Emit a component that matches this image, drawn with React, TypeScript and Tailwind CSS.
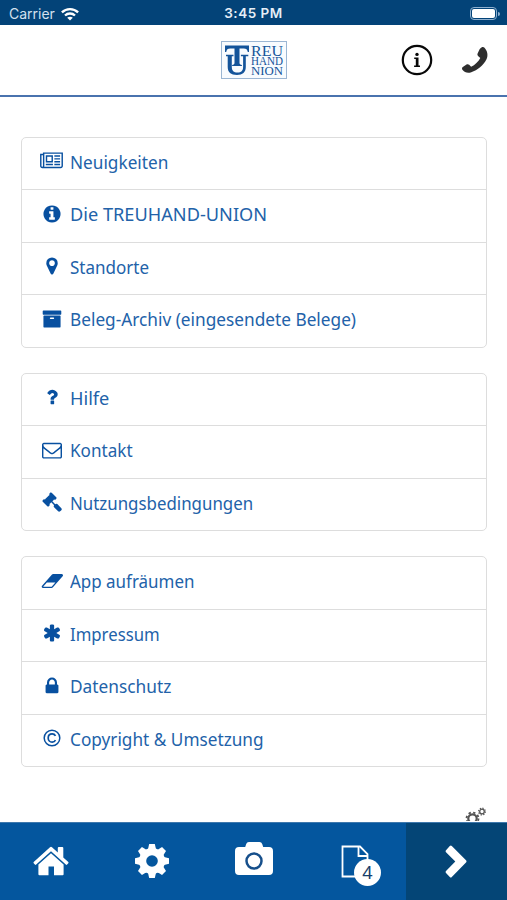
import React from "react";

type Glyph = { box: string; d: string; className: string };

const icons: Record<string, Glyph> = {
  news: {
    box: "0 0 2048 1792",
    className: "w-[23px] h-[20px]",
    d: "M1024 512h-384v384h384v-384zm128 640v128h-640v-128h640zm0-768v640h-640v-640h640zm640 768v128h-512v-128h512zm0-256v128h-512v-128h512zm0-256v128h-512v-128h512zm0-256v128h-512v-128h512zm-1536 960v-960h-128v960q0 26 19 45t45 19 45-19 19-45zm1664 0v-1088h-1536v1088q0 33-11 64h1483q26 0 45-19t19-45zm128-1216v1216q0 80-56 136t-136 56h-1664q-80 0-136-56t-56-136v-1088h256v-128h1792z",
  },
  info: {
    box: "0 0 1792 1792",
    className: "w-[20px] h-[20px]",
    d: "M1152 1376v-160q0-14-9-23t-23-9h-96v-512q0-14-9-23t-23-9h-320q-14 0-23 9t-9 23v160q0 14 9 23t23 9h96v320h-96q-14 0-23 9t-9 23v160q0 14 9 23t23 9h448q14 0 23-9t9-23zm-128-896v-160q0-14-9-23t-23-9h-192q-14 0-23 9t-9 23v160q0 14 9 23t23 9h192q14 0 23-9t9-23zm640 416q0 209-103 385.5t-279.5 279.5-385.5 103-385.5-103-279.5-279.5-103-385.5 103-385.5 279.5-279.5 385.5-103 385.5 103 279.5 279.5 103 385.5z",
  },
  marker: {
    box: "0 0 1792 1792",
    className: "w-[20px] h-[20px]",
    d: "M1152 640q0-106-75-181t-181-75-181 75-75 181 75 181 181 75 181-75 75-181zm256 0q0 109-33 179l-364 774q-16 33-47.5 52t-67.5 19-67.5-19-46.5-52l-365-774q-33-70-33-179 0-212 150-362t362-150 362 150 150 362z",
  },
  archive: {
    box: "0 0 1792 1792",
    className: "w-[20px] h-[20px]",
    d: "M1088 832q0-26-19-45t-45-19h-256q-26 0-45 19t-19 45 19 45 45 19h256q26 0 45-19t19-45zm576-192v960q0 26-19 45t-45 19h-1408q-26 0-45-19t-19-45v-960q0-26 19-45t45-19h1408q26 0 45 19t19 45zm64-448v256q0 26-19 45t-45 19h-1536q-26 0-45-19t-19-45v-256q0-26 19-45t45-19h1536q26 0 45 19t19 45z",
  },
  question: {
    box: "0 0 1792 1792",
    className: "w-[20px] h-[20px]",
    d: "M1088 1256v240q0 16-12 28t-28 12h-240q-16 0-28-12t-12-28v-240q0-16 12-28t28-12h240q16 0 28 12t12 28zm316-600q0 54-15.5 101t-35 76.5-55 59.5-57.5 43.5-61 35.5q-41 23-68.5 65t-27.5 67q0 17-12 32.5t-28 15.5h-240q-15 0-25.5-18.5t-10.5-37.5v-45q0-83 65-156.5t143-108.5q59-27 84-56t25-76q0-42-46.5-74t-107.5-32q-65 0-108 29-35 25-107 115-13 16-31 16-12 0-25-8l-164-125q-13-10-15.5-25t5.5-28q160-266 464-266 80 0 161 31t146 83 106 127.5 41 158.5z",
  },
  mail: {
    box: "0 0 1792 1792",
    className: "w-[20px] h-[20px]",
    d: "M1664 1504v-768q-32 36-69 66-268 206-426 338-51 43-83 67t-86.5 48.5-102.5 24.5h-2q-48 0-102.5-24.5t-86.5-48.5-83-67q-158-132-426-338-37-30-69-66v768q0 13 9.5 22.5t22.5 9.5h1472q13 0 22.5-9.5t9.5-22.5zm0-1051v-24.5l-.5-13-3-12.5-5.5-9-9-7.5-14-2.5h-1472q-13 0-22.5 9.5t-9.5 22.5q0 168 147 284 193 152 401 317 6 5 35 29.5t46 37.5 44.5 31.5 50.5 27.5 43 9h2q20 0 43-9t50.5-27.5 44.5-31.5 46-37.5 35-29.5q208-165 401-317 54-43 100.5-115.5t46.5-131.5zm128-37v1088q0 66-47 113t-113 47h-1472q-66 0-113-47t-47-113v-1088q0-66 47-113t113-47h1472q66 0 113 47t47 113z",
  },
  gavel: {
    box: "0 0 1792 1792",
    className: "w-[20px] h-[20px]",
    d: "M1771 1536q0 53-37 90l-107 108q-39 37-91 37-53 0-90-37l-363-364q-38-36-38-90 0-53 43-96l-256-256-126 126q-14 14-34 14t-34-14q2 2 12.5 12t12.5 13 10 11.5 10 13.5 6 13.5 5.5 16.5 1.5 18q0 38-28 68-3 3-16.5 18t-19 20.5-18.5 16.5-22 15.5-22 9-26 4.5q-40 0-68-28l-408-408q-28-28-28-68 0-13 4.5-26t9-22 15.5-22 16.5-18.5 20.5-19 18-16.5q30-28 68-28 10 0 18 1.5t16.5 5.5 13.5 6 13.5 10 11.5 10 13 12.5 12 12.5q-14-14-14-34t14-34l348-348q14-14 34-14t34 14q-2-2-12.5-12t-12.5-13-10-11.5-10-13.5-6-13.5-5.5-16.5-1.5-18q0-38 28-68 3-3 16.5-18t19-20.5 18.5-16.5 22-15.5 22-9 26-4.5q40 0 68 28l408 408q28 28 28 68 0 13-4.5 26t-9 22-15.5 22-16.5 18.5-20.5 19-18 16.5q-30 28-68 28-10 0-18-1.5t-16.5-5.5-13.5-6-13.5-10-11.5-10-13-12.5-12-12.5q14 14 14 34t-14 34l-126 126 256 256q43-43 96-43 52 0 91 37l363 363q37 39 37 91z",
  },
  eraser: {
    box: "0 0 1984 1792",
    className: "w-[22px] h-[20px]",
    d: "M960 1408l336-384h-768l-336 384h768zm1013-1077q15 34 9.5 71.5t-30.5 65.5l-896 1024q-38 44-96 44h-768q-38 0-69.5-20.5t-47.5-54.5q-15-34-9.5-71.5t30.5-65.5l896-1024q38-44 96-44h768q38 0 69.5 20.5t47.5 54.5z",
  },
  asterisk: {
    box: "0 0 1792 1792",
    className: "w-[20px] h-[20px]",
    d: "M1546 1050q46 26 59.5 77.5t-12.5 97.5l-64 110q-26 46-77.5 59.5t-97.5-12.5l-266-153v307q0 52-38 90t-90 38h-128q-52 0-90-38t-38-90v-307l-266 153q-46 26-97.5 12.5t-77.5-59.5l-64-110q-26-46-12.5-97.5t59.5-77.5l266-154-266-154q-46-26-59.5-77.5t12.5-97.5l64-110q26-46 77.5-59.5t97.5 12.5l266 153v-307q0-52 38-90t90-38h128q52 0 90 38t38 90v307l266-153q46-26 97.5-12.5t77.5 59.5l64 110q26 46 12.5 97.5t-59.5 77.5l-266 154z",
  },
  lock: {
    box: "0 0 1792 1792",
    className: "w-[20px] h-[20px]",
    d: "M640 768h512v-192q0-106-75-181t-181-75-181 75-75 181v192zm832 96v576q0 40-28 68t-68 28h-960q-40 0-68-28t-28-68v-576q0-40 28-68t68-28h32v-192q0-184 132-316t316-132 316 132 132 316v192h32q40 0 68 28t28 68z",
  },
};

const groups = [
  [
    { icon: "news", label: "Neuigkeiten", stretch: "scale-x-[0.956]" },
    { icon: "info", label: "Die TREUHAND-UNION", stretch: "scale-x-[1.01]" },
    { icon: "marker", label: "Standorte", stretch: "scale-x-[0.945]" },
    { icon: "archive", label: "Beleg-Archiv (eingesendete Belege)", stretch: "scale-x-[0.958]" },
  ],
  [
    { icon: "question", label: "Hilfe", stretch: "scale-x-[1.01]" },
    { icon: "mail", label: "Kontakt", stretch: "scale-x-[0.95]" },
    { icon: "gavel", label: "Nutzungsbedingungen", stretch: "scale-x-[0.937]" },
  ],
  [
    { icon: "eraser", label: "App aufräumen", stretch: "scale-x-[0.942]" },
    { icon: "asterisk", label: "Impressum", stretch: "scale-x-[0.93]" },
    { icon: "lock", label: "Datenschutz", stretch: "scale-x-[0.96]" },
    { icon: "copyright", label: "Copyright & Umsetzung", stretch: "scale-x-[0.956]" },
  ],
];

function MenuIcon({ name }: { name: string }) {
  if (name === "copyright") {
    return (
      <svg viewBox="0 0 20 20" className="h-5 w-5" fill="none" stroke="currentColor">
        <circle cx="10" cy="10" r="7.8" strokeWidth="1.5" />
        <path d="M13.5 7.8C12.8 6.4 11.6 5.8 10.2 5.8C7.8 5.8 6.2 7.6 6.2 10s1.6 4.2 4 4.2c1.4 0 2.6-.6 3.3-2" strokeWidth="1.7" />
      </svg>
    );
  }
  const icon = icons[name];
  return (
    <svg viewBox={icon.box} className={`${icon.className} shrink-0`} fill="currentColor">
      <path d={icon.d} />
    </svg>
  );
}

function StatusBar() {
  return (
    <div className="grid h-[25px] grid-cols-3 items-center bg-[#034378] pt-0.5 font-[Inter,sans-serif] text-white">
      <div className="flex items-center gap-[6px] pl-[9px]">
        <span className="text-[14px] text-[#d3e0ee]">Carrier</span>
        <svg viewBox="0 0 18 14" className="h-[14px] w-[18px]" fill="none" stroke="white" strokeWidth="2.3">
          <path d="M.9 5.4C5.4.9 12.6.9 17.1 5.4" />
          <path d="M4 8.5c2.8-2.7 7.2-2.7 10 0" />
          <path d="M9 13.6 6.2 10.8c1.5-1.4 4.1-1.4 5.6 0z" fill="white" stroke="none" />
        </svg>
      </div>
      <span className="text-center text-[13.5px] font-semibold tracking-[0.5px] text-[#e6eef7]">3:45 PM</span>
      <div className="flex items-center justify-end gap-px pr-[7px]">
        <div className="h-[13px] w-[27px] rounded-[4px] border border-[#8fb0cf] p-px">
          <div className="h-full rounded-[2px] bg-white" />
        </div>
        <div className="h-1 w-[2px] rounded-r bg-[#8fb0cf]" />
      </div>
    </div>
  );
}

function Logo() {
  return (
    <svg viewBox="0 0 66 38" className="h-[38px] w-[66px]" fill="#14549a" fontFamily="Liberation Serif, serif">
      <rect x=".5" y=".5" width="65" height="37" fill="#f8fbfe" stroke="#9bb6d3" />
      {/* Interlocked T and U */}
      <path d="M4 4.500h24v6.500h-1.200c-.4-2.500-1.500-3.600-4-3.600h-4.300v14.400c0 1.500.7 2 2.400 2.100v1.100h-9.800v-1.100c1.700-.1 2.400-.6 2.400-2.100V7.400H9.200c-2.500 0-3.600 1.100-4 3.600H4z" />
      <path d="M5 13.800h7.500v1.400h-1.700V26c0 3.600 2 5.600 5.700 5.600s5.600-2 5.600-5.600V15.200h-2.200v-1.400h7.400v1.400h-2.500V26c0 5.300-3.200 8-8.800 8-6.200 0-9.300-2.700-9.300-8V15.200H5z" />
      <text x="30" y="14.500" fontSize="15.500" textLength="32" lengthAdjust="spacingAndGlyphs">REU</text>
      <text x="30" y="24.300" fontSize="11.500" textLength="32" lengthAdjust="spacingAndGlyphs">HAND</text>
      <text x="30" y="34.300" fontSize="13" textLength="32" lengthAdjust="spacingAndGlyphs">NION</text>
    </svg>
  );
}

function Header() {
  return (
    <header className="grid h-[72px] grid-cols-[1fr_66px_1fr] items-center border-b-2 border-[#4a73ae] bg-white">
      <div />
      <Logo />
      <div className="flex items-center justify-end gap-[28px] pr-[18px]">
        <svg viewBox="0 0 32 32" className="h-8 w-8">
          <circle cx="16" cy="16" r="14.200" fill="none" stroke="#080808" strokeWidth="2.200" />
          <circle cx="16" cy="10.400" r="1.700" fill="#080808" />
          <path d="M13.200 13.500h4.300v8h1.500V23h-5.900v-1.500h1.700V15h-1.600z" fill="#080808" />
        </svg>
        <svg viewBox="0 0 28 28" className="h-7 w-7" fill="#2e2e2e">
          <path d="M20.800 1.300c.8-.6 2-.4 2.700.4 2.700 2.900 4 7.500 2 11.500-3 6-9 11-15.200 13-3.600 1.200-6.800.3-8.900-2.500-.6-.9-.5-2 .4-2.600l3.700-2.600c.8-.5 2-.4 2.700.3l1.900 2c3.900-2 7.200-5.200 9.200-8.900l-2-1.600c-.9-.7-1.100-1.700-.7-2.700l2-4.300c.4-.8 1.200-1.400 2.200-2z" />
        </svg>
      </div>
    </header>
  );
}

type Item = { icon: string; label: string; stretch: string };

function MenuGroup({ items }: { items: Item[] }) {
  return (
    <ul className="rounded-[5px] border border-[#dddddd] bg-white">
      {items.map((item) => (
        <li
          key={item.label}
          className="flex h-[52.500px] items-center border-b border-[#dddddd] pb-[2px] pl-[18px] text-[#0850a0] last:h-[51.500px] last:border-b-0"
        >
          <span className="flex w-[24px] shrink-0 justify-center pb-[2px]">
            <MenuIcon name={item.icon} />
          </span>
          <span className={`ml-[6px] origin-left text-[18px] whitespace-nowrap text-[#2262a9] ${item.stretch}`}>
            {item.label}
          </span>
        </li>
      ))}
    </ul>
  );
}

function TabBar() {
  return (
    <nav className="grid h-[78px] grid-cols-5 border-t border-[#3e78ad] bg-[#04569e] text-white">
      <div className="flex items-center justify-center pb-[2px]">
        <svg viewBox="0 0 36 30" className="h-[30px] w-[36px]" fill="white">
          <path d="M17 1.300q1-.9 2 0L24.800 6.500V2q0-1 1-1h3.500q1 0 1 1V11.600l5 4.500q.5.600 0 1.200l-1.200 1.300q-.7.600-1.300 0L18 5.200 3.200 18.600q-.6.600-1.300 0L.7 17.300q-.5-.6 0-1.200z" />
          <path d="M18 7.300 30.600 18.600V28.300q0 1-1 1H21V20.400h-5.500v8.900H6.400q-1 0-1-1V18.600z" />
        </svg>
      </div>
      <div className="flex items-center justify-center pb-[2px]">
        <svg viewBox="-17 -17 34 34" className="h-[34px] w-[34px]" fill="white">
          {[0, 45, 90, 135].map((angle) => (
            <path key={angle} d="M-2.800-17h5.600l1.200 5V12l-1.200 5h-5.600L-4 12V-12z" transform={`rotate(${angle})`} />
          ))}
          <circle r="13" />
          <circle r="5.800" fill="#04569e" />
        </svg>
      </div>
      <div className="flex items-center justify-center pb-[7px] pl-px">
        <svg viewBox="0 0 38 33" className="h-[33px] w-[38px]" fill="white">
          <path d="M4 5h6.200l1-3q.7-2 2.700-2h10.600q2 0 2.700 2l1 3H34q4 0 4 4v20q0 4-4 4H4q-4 0-4-4V9q0-4 4-4z" />
          <circle cx="19" cy="19" r="7.500" fill="none" stroke="#164f8b" strokeWidth="2.500" />
        </svg>
      </div>
      <div className="flex items-center justify-center">
        <div className="relative">
          <svg viewBox="0 0 28 33" className="h-[33px] w-[28px]" fill="none" stroke="white" strokeWidth="1.800">
            <path d="M1.500 1.500h17.500L26.500 9v22.500h-25z" />
            <path d="M17.500 1.500V11h9" />
          </svg>
          <span className="absolute top-[14px] left-[13px] flex h-[27px] w-[27px] items-center justify-center rounded-full bg-white text-[18px] text-[#183f6b]">
            4
          </span>
        </div>
      </div>
      <div className="flex items-center justify-center bg-[#044576] pb-px">
        <svg viewBox="0 0 22 33" className="h-[33px] w-[22px]" fill="white">
          <path d="M1 5.200 4.800.9q1-1 2 0L21 15.200q1 1.200 0 2.400L6.800 32q-1 1-2 0L1 27.900q-.8-1 0-2l9.300-9.400L1 7.200q-.8-1 0-2z" />
        </svg>
      </div>
    </nav>
  );
}

// Small cogs, mostly hidden behind the tab bar
function AdminCogs() {
  return (
    <svg viewBox="0 0 22 14" className="h-[14px] w-[22px]" fill="none" stroke="#555">
      <circle cx="7.500" cy="11.500" r="4.200" strokeWidth="2.200" />
      <circle cx="7.500" cy="11.500" r="6" strokeWidth="1.800" strokeDasharray="2.350 2.350" />
      <circle cx="17" cy="4.500" r="2.300" strokeWidth="1.300" />
      <circle cx="17" cy="4.500" r="3.400" strokeWidth="1.200" strokeDasharray="1.300 1.370" />
    </svg>
  );
}

export default function App() {
  return (
    <div className="flex h-[900px] w-[507px] flex-col overflow-hidden bg-white font-['Noto_Sans',sans-serif]">
      <StatusBar />
      <Header />
      <main className="flex min-h-0 flex-1 flex-col gap-[25px] overflow-hidden pt-[39.500px] pr-[20px] pl-[20.500px]">
        {groups.map((items) => (
          <MenuGroup key={items[0].label} items={items} />
        ))}
        <div className="mt-[15px] flex h-[14px] shrink-0 justify-end">
          <AdminCogs />
        </div>
      </main>
      <TabBar />
    </div>
  );
}
